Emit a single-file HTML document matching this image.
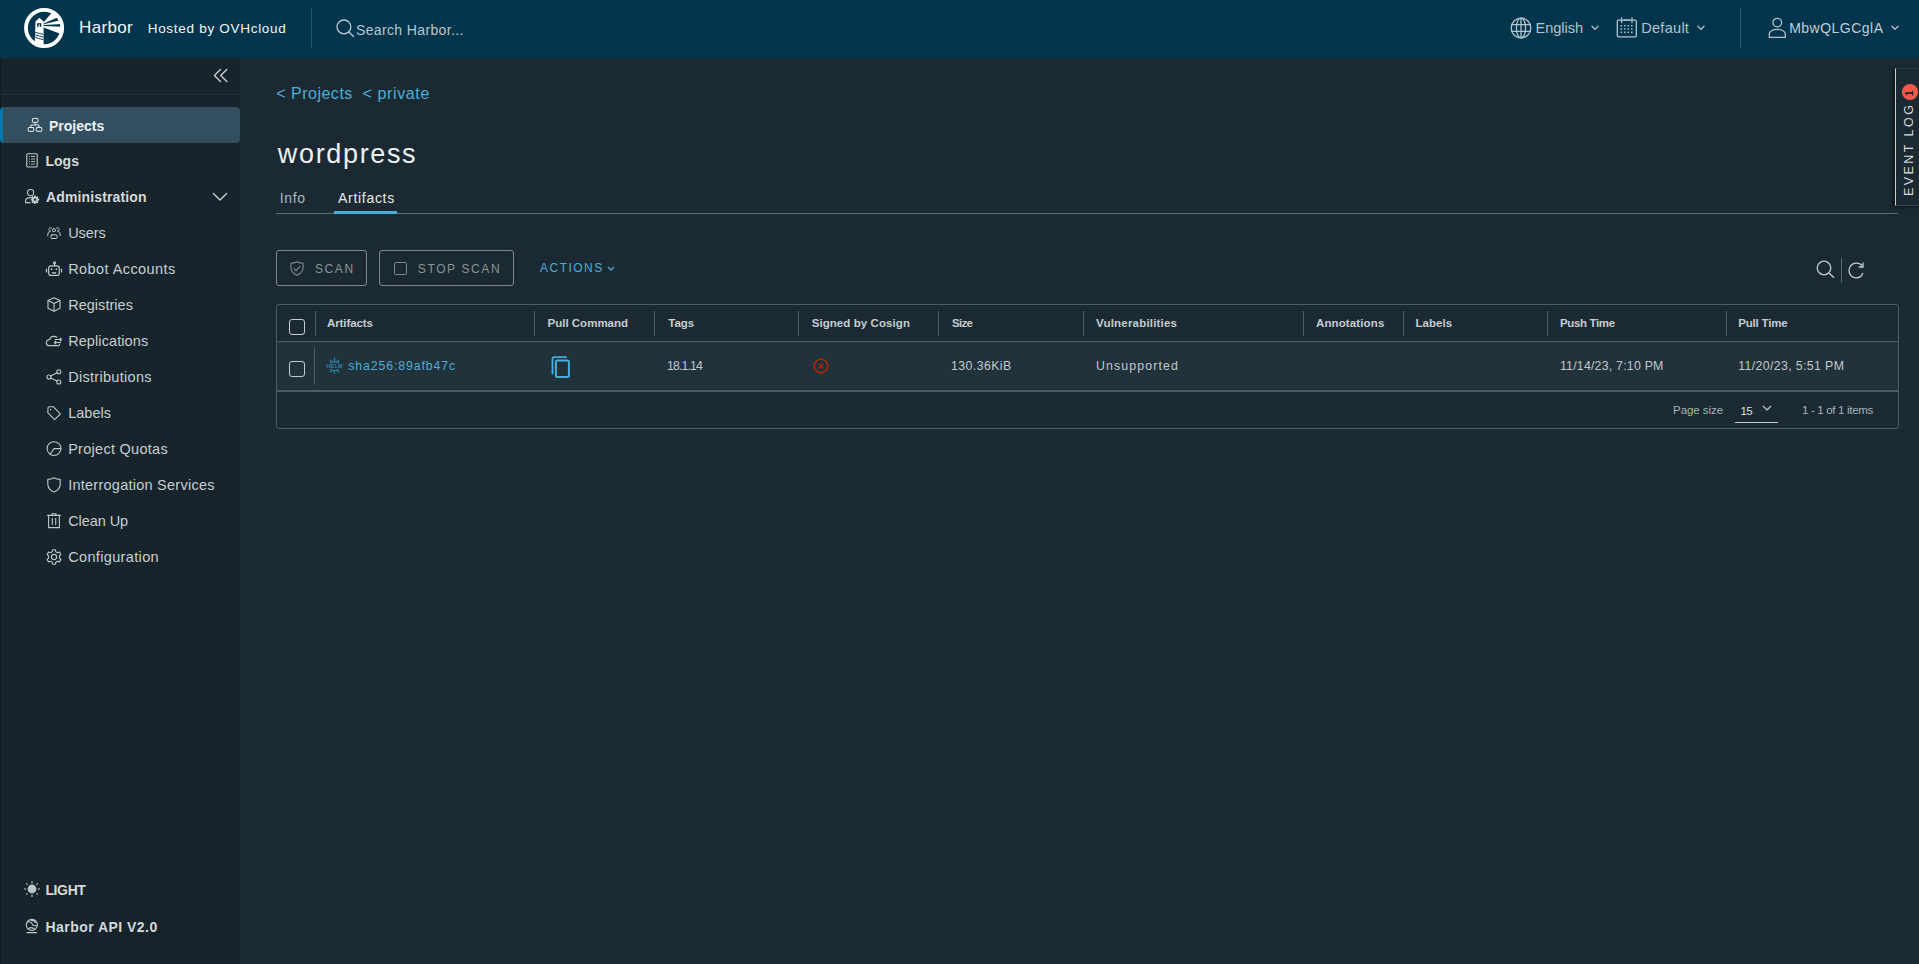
<!DOCTYPE html>
<html><head><meta charset="utf-8">
<style>
*{box-sizing:border-box;margin:0;padding:0}
html,body{width:1919px;height:964px;overflow:hidden;background:#1b2a32;font-family:"Liberation Sans",sans-serif;}
.a{position:absolute;white-space:nowrap;line-height:1}
svg{position:absolute;overflow:visible}
#hdr{position:absolute;left:0;top:0;width:1919px;height:58px;background:#00354d}
#side{position:absolute;left:0;top:58px;width:240px;height:906px;background:#17242b}
.nav{color:#c8ced1;font-size:14.5px}
.navb{color:#d3d9dc;font-size:14px;font-weight:bold}
.link{color:#49afd9}
.th{color:#c6ccd0;font-size:11.5px;font-weight:bold}
.td{color:#c3c9cd;font-size:12.3px}
.vs{position:absolute;width:1px;background:#4b5c66}
.ic{fill:none;stroke:#c1c8cc;stroke-width:1.3;stroke-linecap:round;stroke-linejoin:round}
.hic{fill:none;stroke:#b3c3cb;stroke-width:1.3;stroke-linecap:round;stroke-linejoin:round}
</style></head><body>
<div id="hdr">
  <!-- logo -->
  <svg style="left:20px;top:4px" width="50" height="50" viewBox="0 0 50 50">
    <defs><clipPath id="cc"><circle cx="24.1" cy="24" r="17"/></clipPath></defs>
    <g clip-path="url(#cc)">
      <polygon fill="#fff" points="23.6,18.2 32.5,8 39,11 43,20 41,30 23.6,23.5"/>
      <polygon fill="#00354d" points="23.6,19.4 38,13.2 39,16.5 23.6,20.3"/>
      <polygon fill="#00354d" points="23.6,21.1 42,20 42,22.8 23.6,21.9"/>
      <polygon fill="#fff" points="19.45,13.8 23.6,17.4 23.6,45 14.5,45 15.5,17.4"/>
      <rect x="17.1" y="19.2" width="4.2" height="3.6" fill="#00354d"/>
      <rect x="18.6" y="20.4" width="1.2" height="2.4" fill="#fff"/>
      <path d="M15 28.2 L23.6 30.6 M15 30.8 L23.6 33.2 M15 33.4 L23.6 35.8" stroke="#00354d" stroke-width="0.9"/>
    </g>
    <circle cx="24.1" cy="24" r="18.1" fill="none" stroke="#fff" stroke-width="3.8"/>
  </svg>
  <div class="a" style="left:79.08px;top:18.86px;font-size:17px;color:#f4f6f7;letter-spacing:0.34px">Harbor</div>
  <div class="a" style="left:147.68px;top:22.08px;font-size:13.5px;color:#f4f6f7;letter-spacing:0.71px">Hosted by OVHcloud</div>
  <div style="position:absolute;left:311px;top:8px;width:1px;height:40px;background:#2a5468"></div>
  <svg style="left:336px;top:19px" width="19" height="19" viewBox="0 0 19 19">
    <circle cx="7.9" cy="7.9" r="6.9" fill="none" stroke="#b9c7ce" stroke-width="1.3"/>
    <line x1="12.9" y1="12.9" x2="17.6" y2="17.6" stroke="#b9c7ce" stroke-width="1.4" stroke-linecap="round"/>
  </svg>
  <div class="a" style="left:356.00px;top:22.68px;font-size:14px;color:#b9c7ce;letter-spacing:0.36px">Search Harbor...</div>

  <!-- globe -->
  <svg style="left:1510px;top:17px" width="22" height="22" viewBox="0 0 22 22">
    <g class="hic">
      <circle cx="11" cy="11" r="9.8"/>
      <ellipse cx="11" cy="11" rx="4.6" ry="9.8"/>
      <line x1="11" y1="1.2" x2="11" y2="20.8"/>
      <line x1="1.6" y1="7.6" x2="20.4" y2="7.6"/>
      <line x1="1.6" y1="14.4" x2="20.4" y2="14.4"/>
    </g>
  </svg>
  <div class="a" style="left:1535.60px;top:20.72px;font-size:14.6px;color:#b3c3cb;letter-spacing:-0.07px">English</div>
  <svg style="left:1591px;top:25px" width="8" height="6" viewBox="0 0 8 6"><path class="hic" d="M1 1.2 L4 4.4 L7 1.2"/></svg>
  <!-- calendar -->
  <svg style="left:1616px;top:17px" width="22" height="21" viewBox="0 0 22 21">
    <g class="hic">
      <rect x="1.3" y="3.2" width="19" height="16.6" rx="1"/>
      <line x1="5.6" y1="1" x2="5.6" y2="5.5"/>
      <line x1="16" y1="1" x2="16" y2="5.5"/>
      <line x1="8" y1="3.2" x2="13.6" y2="3.2"/>
    </g>
    <g fill="#b3c3cb">
      <rect x="4.5" y="8" width="1.6" height="1.4"/><rect x="8" y="8" width="1.6" height="1.4"/><rect x="11.5" y="8" width="1.6" height="1.4"/><rect x="15" y="8" width="1.6" height="1.4"/>
      <rect x="4.5" y="11.3" width="1.6" height="1.4"/><rect x="8" y="11.3" width="1.6" height="1.4"/><rect x="11.5" y="11.3" width="1.6" height="1.4"/><rect x="15" y="11.3" width="1.6" height="1.4"/>
      <rect x="4.5" y="14.6" width="1.6" height="1.4"/><rect x="8" y="14.6" width="1.6" height="1.4"/><rect x="11.5" y="14.6" width="1.6" height="1.4"/><rect x="15" y="14.6" width="1.6" height="1.4"/>
    </g>
  </svg>
  <div class="a" style="left:1641.20px;top:20.72px;font-size:14.6px;color:#b3c3cb;letter-spacing:0.25px">Default</div>
  <svg style="left:1697px;top:25px" width="8" height="6" viewBox="0 0 8 6"><path class="hic" d="M1 1.2 L4 4.4 L7 1.2"/></svg>
  <div style="position:absolute;left:1740px;top:8px;width:1px;height:40px;background:#2a5468"></div>
  <!-- user -->
  <svg style="left:1767px;top:17px" width="21" height="22" viewBox="0 0 21 22">
    <g class="hic">
      <circle cx="10.3" cy="5.6" r="4.3"/>
      <path d="M2.3 20.4 L18.3 20.4 L18.3 16.8 C18.3 14.5 15 12.4 10.3 12.4 C5.6 12.4 2.3 14.5 2.3 16.8 Z"/>
    </g>
  </svg>
  <div class="a" style="left:1789.20px;top:20.96px;font-size:14px;color:#c1ced4;letter-spacing:0.48px">MbwQLGCglA</div>
  <svg style="left:1891px;top:25px" width="8" height="6" viewBox="0 0 8 6"><path class="hic" d="M1 1.2 L4 4.4 L7 1.2"/></svg>
</div>

<div id="side">
  <div style="position:absolute;left:0;top:0;width:1px;height:906px;background:#121b20"></div>
  <svg style="left:213px;top:10px" width="16" height="16" viewBox="0 0 16 16">
    <path class="ic" d="M7.5 1.4 L1.4 7.5 L7.5 13.6 M13.8 1.4 L7.7 7.5 L13.8 13.6" style="stroke:#c8cdd0;stroke-width:1.4"/>
  </svg>
  <div style="position:absolute;left:0;top:36px;width:240px;height:1px;background:#232f36"></div>
  <div style="position:absolute;left:0;top:49px;width:240px;height:36px;background:#324e5f;border-radius:4px 4px 4px 4px;border-left:3px solid #0079ad"></div>
  <!-- projects icon -->
  <svg style="left:27px;top:59px" width="16" height="16" viewBox="0 0 16 16">
    <g fill="none" stroke="#e3e8eb" stroke-width="1">
      <rect x="5.4" y="1.4" width="5.6" height="4" rx="0.5"/>
      <rect x="1.2" y="10.5" width="5.5" height="3.9" rx="0.5"/>
      <rect x="9.3" y="10.5" width="5.5" height="3.9" rx="0.5"/>
      <path d="M8.2 5.4 V8 M3.9 10.5 V8 H12 V10.5"/>
    </g>
  </svg>
  <div class="a navb" style="left:48.92px;top:60.80px;color:#eef1f3;letter-spacing:0.02px">Projects</div>
  <!-- logs icon -->
  <svg style="left:26px;top:95px" width="12" height="15" viewBox="0 0 12 15">
    <rect class="ic" style="stroke-width:1.1" x="0.8" y="0.8" width="10.4" height="13.2" rx="1"/>
    <g fill="#aeb6bb"><rect x="3" y="3" width="1" height="1"/><rect x="5" y="3" width="4" height="1"/><rect x="3" y="5.5" width="1" height="1"/><rect x="5" y="5.5" width="4" height="1"/><rect x="3" y="8" width="1" height="1"/><rect x="5" y="8" width="4" height="1"/><rect x="3" y="10.5" width="1" height="1"/><rect x="5" y="10.5" width="4" height="1"/></g>
  </svg>
  <div class="a navb" style="left:45.44px;top:95.52px;letter-spacing:0.02px">Logs</div>
  <!-- admin icon -->
  <svg style="left:24px;top:130px" width="17" height="17" viewBox="0 0 17 17">
    <g fill="none" stroke="#c1c8cc" stroke-width="1.1">
      <circle cx="6.6" cy="4.6" r="3.1"/>
      <path d="M6.4 14.6 H1.6 V12.8 C1.6 10.9 3.8 9.6 6.6 9.6 C7.3 9.6 7.9 9.7 8.4 9.8"/>
    </g>
    <g fill="#c1c8cc">
      <circle cx="11" cy="11.7" r="3.1"/>
      <rect x="10.1" y="7.4" width="1.8" height="8.6" rx="0.3" transform="rotate(0 11 11.7)"/><rect x="10.1" y="7.4" width="1.8" height="8.6" rx="0.3" transform="rotate(45 11 11.7)"/><rect x="10.1" y="7.4" width="1.8" height="8.6" rx="0.3" transform="rotate(90 11 11.7)"/><rect x="10.1" y="7.4" width="1.8" height="8.6" rx="0.3" transform="rotate(135 11 11.7)"/>
    </g>
    <circle cx="11" cy="11.7" r="1.1" fill="#17242b"/>
  </svg>
  <div class="a navb" style="left:46.00px;top:132.32px;letter-spacing:0.13px">Administration</div>
  <svg style="left:212px;top:134px" width="16" height="10" viewBox="0 0 16 10">
    <path class="ic" d="M1.4 1.6 L8 8 L14.6 1.6" style="stroke:#c8cdd0;stroke-width:1.4"/>
  </svg>

  <!-- users icon -->
  <svg style="left:46px;top:168px" width="16" height="14" viewBox="0 0 16 14">
    <g fill="none" stroke="#c1c8cc" stroke-width="1" stroke-linecap="round">
      <circle cx="8" cy="4.2" r="1.6"/>
      <rect x="4.9" y="8.8" width="6.2" height="3.7" rx="1"/>
      <path d="M5.7 2.1 A1.7 1.7 0 1 0 4.6 5.1 L2.3 6.4 L1.7 9.6 M10.3 2.1 A1.7 1.7 0 1 1 11.4 5.1 L13.7 6.4 L14.3 9.6"/>
    </g>
  </svg>
  <div class="a nav" style="left:68.16px;top:167.60px;letter-spacing:-0.08px">Users</div>
  <!-- robot -->
  <svg style="left:45px;top:203px" width="18" height="16" viewBox="0 0 18 16">
    <g fill="none" stroke="#c1c8cc" stroke-width="1.2" stroke-linecap="round">
      <rect x="3.7" y="4.8" width="10.6" height="9.6" rx="2.2"/>
      <path d="M9.5 2.8 V4.8"/><circle cx="9.5" cy="1.8" r="1"/>
      <path d="M1.5 8 V11 M16.5 8 V11"/>
    </g>
    <g fill="#c1c8cc"><circle cx="6.6" cy="8.2" r="0.85"/><circle cx="11.4" cy="8.2" r="0.85"/><rect x="6.9" y="11.2" width="4.3" height="1.3"/></g>
  </svg>
  <div class="a nav" style="left:68.16px;top:203.60px;letter-spacing:0.43px">Robot Accounts</div>
  <!-- registries cube -->
  <svg style="left:47px;top:239px" width="14" height="15" viewBox="0 0 14 15">
    <g class="ic" style="stroke-width:1.1">
      <path d="M7 0.8 L13 3.6 V11.2 L7 14.2 L1 11.2 V3.6 Z"/>
      <path d="M1 3.6 L7 6.6 L13 3.6 M7 6.6 V14.2"/>
    </g>
  </svg>
  <div class="a nav" style="left:68.16px;top:239.60px;letter-spacing:0.03px">Registries</div>
  <!-- replications cloud -->
  <svg style="left:45px;top:276px" width="18" height="14" viewBox="0 0 18 14">
    <g fill="none" stroke="#c1c8cc" stroke-width="1.1" stroke-linecap="round" stroke-linejoin="round">
      <path d="M11.9 3.4 C11 2.4 9.6 2.2 7.6 2.4 C5.8 2.8 4.9 4.2 4.6 5.6 C3 5.7 1.3 6.8 1.3 9.2 C1.5 10.6 2.3 11.6 3.4 11.6 H13.8 C14.4 11.4 14.7 10.8 14.7 10.1"/>
      <path d="M10.2 5.5 H16.5 M15.2 4.2 L16.5 5.5 L15.2 6.8 M15.4 8.5 H9.5 M10.8 7.2 L9.5 8.5 L10.8 9.8"/>
    </g>
  </svg>
  <div class="a nav" style="left:68.16px;top:275.60px;letter-spacing:0.09px">Replications</div>
  <!-- distributions share -->
  <svg style="left:46px;top:311px" width="16" height="16" viewBox="0 0 16 16">
    <g class="ic" style="stroke-width:1.1">
      <circle cx="3" cy="8" r="2"/><circle cx="12.8" cy="2.8" r="2"/><circle cx="12.8" cy="13" r="2"/>
      <path d="M4.8 7 L11 3.8 M4.8 9 L11 12"/>
    </g>
  </svg>
  <div class="a nav" style="left:68.16px;top:311.60px;letter-spacing:0.30px">Distributions</div>
  <!-- labels tag -->
    <svg style="left:47px;top:348px" width="15" height="15" viewBox="0 0 15 15">
    <g class="ic" style="stroke-width:1.1">
      <path d="M1 2 C1 1.4 1.4 0.8 2 0.8 H6.4 L13.4 7.8 L7.6 13.6 L0.8 6.6 Z"/>
    </g>
    <circle cx="3.6" cy="3.6" r="0.8" fill="#c1c8cc"/>
  </svg>
  <div class="a nav" style="left:68.16px;top:347.60px;letter-spacing:0.02px">Labels</div>
  <!-- quotas pie -->
  <svg style="left:46px;top:383px" width="16" height="16" viewBox="0 0 16 16">
    <g class="ic" style="stroke-width:1.1">
      <circle cx="8" cy="7.6" r="6.9"/>
      <path d="M14.9 7.6 H8 L4.2 13.2"/>
    </g>
  </svg>
  <div class="a nav" style="left:68.16px;top:383.60px;letter-spacing:0.28px">Project Quotas</div>
  <!-- shield -->
  <svg style="left:47px;top:419px" width="14" height="16" viewBox="0 0 14 16">
    <path class="ic" style="stroke-width:1.1" d="M7 0.8 C5 2 3 2.4 0.8 2.4 V7 C0.8 10.6 3.4 13.6 7 15 C10.6 13.6 13.2 10.6 13.2 7 V2.4 C11 2.4 9 2 7 0.8 Z"/>
  </svg>
  <div class="a nav" style="left:68.16px;top:419.60px;letter-spacing:0.25px">Interrogation Services</div>
  <!-- trash -->
  <svg style="left:47px;top:455px" width="14" height="16" viewBox="0 0 14 16">
    <g class="ic" style="stroke-width:1.1">
      <path d="M0.6 2.4 H13.4 M5 2.4 V0.8 H9 V2.4 M1.6 2.4 V14.6 H12.4 V2.4 M5.3 5.2 V11.6 M8.7 5.2 V11.6"/>
    </g>
  </svg>
  <div class="a nav" style="left:68.16px;top:455.60px;letter-spacing:-0.07px">Clean Up</div>
  <!-- gear -->
  <svg style="left:46px;top:491px" width="16" height="16" viewBox="0 0 16 16">
    <g class="ic" style="stroke-width:1.1">
      <path d="M6.6 0.8 H9.4 L9.8 2.8 L11.6 3.8 L13.5 3.1 L14.9 5.5 L13.4 6.9 V9.1 L14.9 10.5 L13.5 12.9 L11.6 12.2 L9.8 13.2 L9.4 15.2 H6.6 L6.2 13.2 L4.4 12.2 L2.5 12.9 L1.1 10.5 L2.6 9.1 V6.9 L1.1 5.5 L2.5 3.1 L4.4 3.8 L6.2 2.8 Z"/>
      <circle cx="8" cy="8" r="2.6"/>
    </g>
  </svg>
  <div class="a nav" style="left:68.16px;top:491.60px;letter-spacing:0.35px">Configuration</div>

  <!-- sun -->
  <svg style="left:24px;top:823px" width="16" height="16" viewBox="0 0 16 16">
    <circle cx="8" cy="8" r="4.4" fill="#c1c8cc"/>
    <g stroke="#c1c8cc" stroke-width="1.2">
      <path d="M8 0 V2.2 M8 13.8 V16 M0 8 H2.2 M13.8 8 H16 M2.3 2.3 L3.6 3.6 M12.4 12.4 L13.7 13.7 M2.3 13.7 L3.6 12.4 M12.4 3.6 L13.7 2.3"/>
    </g>
  </svg>
  <div class="a navb" style="left:45.44px;top:824.52px;letter-spacing:-0.38px">LIGHT</div>
  <!-- api icon -->
  <svg style="left:25px;top:860px" width="14" height="16" viewBox="0 0 14 16">
    <g fill="none" stroke="#c1c8cc" stroke-width="1.1" stroke-linecap="round">
      <circle cx="6.85" cy="6.9" r="5.5"/>
      <path d="M2.6 4 C4.5 3.4 6.6 4.4 7.4 6.2 C8 7.6 9.4 8 11.6 7.6 M3.6 10.6 C5.2 9.4 7.8 9.6 9.8 11.4 M6 2.4 C7.6 2.2 9.6 3 10.4 4.4"/>
      <path d="M2 14.6 H11.6"/>
    </g>
  </svg>
  <div class="a navb" style="left:45.44px;top:861.80px;letter-spacing:0.46px">Harbor API V2.0</div>
</div>

<!-- content -->
<div class="a link" style="left:276.16px;top:86.28px;font-size:16px;letter-spacing:0.51px">&lt; Projects</div>
<div class="a link" style="left:362.52px;top:86.28px;font-size:16px;letter-spacing:0.62px">&lt; private</div>
<div class="a" style="left:277.80px;top:140.60px;font-size:27px;color:#eef0f1;letter-spacing:1.66px">wordpress</div>
<div class="a" style="left:279.68px;top:191.00px;font-size:14px;color:#adb8be;letter-spacing:0.65px">Info</div>
<div class="a" style="left:338.08px;top:191.00px;font-size:14px;color:#e6e9eb;letter-spacing:0.69px">Artifacts</div>
<div style="position:absolute;left:276px;top:213px;width:1622px;height:1px;background:#5d6e78"></div>
<div style="position:absolute;left:334px;top:211px;width:63px;height:3px;background:#49afd9"></div>

<!-- event log -->
<div style="position:absolute;left:1895px;top:68px;width:30px;height:138px;border-left:1.5px solid #cfd2d4;border-top:1px solid #2b3b43;border-bottom:1px solid #3a4950;box-shadow:-2px 1px 3px rgba(0,0,0,.55);background:#1b2a32"></div>
<div class="a" style="left:1903px;top:196px;font-size:12.5px;color:#d8dcde;letter-spacing:2.45px;transform:rotate(-90deg);transform-origin:0 0">EVENT LOG</div>
<div style="position:absolute;left:1902px;top:84px;width:15.5px;height:15.5px;border-radius:50%;background:#ee5a4a"></div>
<div class="a" style="left:1905px;top:96px;font-size:10px;font-weight:bold;color:#1a1a1a;transform:rotate(-90deg);transform-origin:0 0">1</div>

<!-- toolbar -->
<div style="position:absolute;left:276px;top:250px;width:91px;height:36px;border:1px solid #7f888d;border-radius:3px"></div>
<svg style="left:290px;top:261px" width="14" height="15" viewBox="0 0 14 15">
  <path fill="none" stroke="#7f888d" stroke-width="1.1" d="M7 0.7 C5 1.8 3 2.2 0.9 2.2 V6.6 C0.9 10 3.4 12.8 7 14.2 C10.6 12.8 13.1 10 13.1 6.6 V2.2 C11 2.2 9 1.8 7 0.7 Z M3.8 7.4 L6 9.6 L10.2 5.2"/>
</svg>
<div class="a" style="left:315.00px;top:263.16px;font-size:12px;letter-spacing:1.60px;color:#8c9499">SCAN</div>
<div style="position:absolute;left:379px;top:250px;width:135px;height:36px;border:1px solid #7f888d;border-radius:3px"></div>
<div style="position:absolute;left:394px;top:262px;width:13px;height:13px;border:1.2px solid #7f888d;border-radius:1.5px"></div>
<div class="a" style="left:417.84px;top:263.16px;font-size:12px;letter-spacing:1.61px;color:#8c9499">STOP SCAN</div>
<div class="a link" style="left:540.00px;top:262.00px;font-size:12px;letter-spacing:1.49px">ACTIONS</div>
<svg style="left:607px;top:266px" width="8" height="5" viewBox="0 0 8 5"><path d="M1 1 L4 4 L7 1" fill="none" stroke="#49afd9" stroke-width="1.3"/></svg>

<svg style="left:1816px;top:260px" width="20" height="20" viewBox="0 0 20 20">
  <circle cx="8" cy="8" r="6.8" fill="none" stroke="#c4cbcf" stroke-width="1.3"/>
  <line x1="13" y1="13" x2="18" y2="17.8" stroke="#c4cbcf" stroke-width="1.3"/>
</svg>
<div style="position:absolute;left:1841px;top:258px;width:1px;height:24px;background:#5a6b75"></div>
<svg style="left:1848px;top:262px" width="17" height="17" viewBox="0 0 17 17">
  <path d="M14.4 3.8 C13.1 2.2 11.1 1.2 8.2 1.2 C4.3 1.2 1 4.3 1 8.6 C1 12.8 4.3 15.8 8.2 15.8 C11.4 15.8 14 13.8 14.8 11" fill="none" stroke="#c4cbcf" stroke-width="1.3"/>
  <path d="M15 0.6 V5 H10.6" fill="none" stroke="#c4cbcf" stroke-width="1.3"/>
</svg>

<!-- table -->
<div style="position:absolute;left:276px;top:304px;width:1623px;height:125px;border:1px solid #4b5c66;border-radius:3px"></div>
<div style="position:absolute;left:277px;top:342px;width:1621px;height:48px;background:#22323b"></div>
<div style="position:absolute;left:277px;top:341px;width:1621px;height:1px;background:#4b5c66"></div>
<div style="position:absolute;left:277px;top:390px;width:1621px;height:2px;background:#4b5c66"></div>

<!-- header -->
<div style="position:absolute;left:289px;top:319px;width:16px;height:16px;border:1.5px solid #c6cbce;border-radius:3px"></div>
<div class="vs" style="left:315px;top:311px;height:25px"></div>
<div class="a th" style="left:327.00px;top:317.52px;letter-spacing:-0.10px">Artifacts</div>
<div class="vs" style="left:534px;top:311px;height:25px"></div>
<div class="a th" style="left:547.48px;top:318.00px;letter-spacing:0.01px">Pull Command</div>
<div class="vs" style="left:654px;top:311px;height:25px"></div>
<div class="a th" style="left:668.28px;top:318.00px;letter-spacing:-0.06px">Tags</div>
<div class="vs" style="left:798px;top:311px;height:25px"></div>
<div class="a th" style="left:811.64px;top:318.00px;letter-spacing:0.08px">Signed by Cosign</div>
<div class="vs" style="left:938px;top:311px;height:25px"></div>
<div class="a th" style="left:951.88px;top:318.24px;letter-spacing:-0.67px">Size</div>
<div class="vs" style="left:1083px;top:311px;height:25px"></div>
<div class="a th" style="left:1096.00px;top:317.76px;letter-spacing:0.20px">Vulnerabilities</div>
<div class="vs" style="left:1303px;top:311px;height:25px"></div>
<div class="a th" style="left:1316.00px;top:318.00px;letter-spacing:0.12px">Annotations</div>
<div class="vs" style="left:1403px;top:311px;height:25px"></div>
<div class="a th" style="left:1415.40px;top:318.00px;letter-spacing:0.07px">Labels</div>
<div class="vs" style="left:1547px;top:311px;height:25px"></div>
<div class="a th" style="left:1559.92px;top:318.00px;letter-spacing:-0.34px">Push Time</div>
<div class="vs" style="left:1726px;top:311px;height:25px"></div>
<div class="a th" style="left:1738.28px;top:318.00px;letter-spacing:-0.20px">Pull Time</div>

<!-- row -->
<div style="position:absolute;left:289px;top:361px;width:16px;height:16px;border:1.5px solid #c6cbce;border-radius:3px"></div>
<div class="vs" style="left:314px;top:347px;height:38px"></div>
<svg style="left:326px;top:357px" width="18" height="17" viewBox="0 0 18 17">
  <g fill="none" stroke="#2a86ad" stroke-width="1.1" stroke-linecap="round">
    <path d="M4.5 5.8 Q8.5 3.6 12.5 5.8 M4.5 12.6 Q8.5 14.8 12.5 12.6"/>
    <path d="M8.5 4.5 V1.2 M6.2 4.8 L4.1 3.2 M10.8 4.8 L12.9 3.2 M8.5 13.9 V16.2 M6.2 13.6 L4.1 15 M10.8 13.6 L12.9 15"/>
  </g>
  <text x="8.6" y="11.1" font-size="5.4" font-weight="bold" text-anchor="middle" fill="#2a86ad" font-family="Liberation Sans" letter-spacing="0.2">HELM</text>
</svg>
<div class="a td" style="color:#49afd9;left:348.16px;top:360.04px;letter-spacing:0.90px">sha256:89afb47c</div>
<svg style="left:550px;top:355px" width="22" height="24" viewBox="0 0 22 24">
  <path d="M2.5 18.6 V3.8 C2.5 2.8 3.1 2.1 4.1 2.1 H16.1" fill="none" stroke="#49afd9" stroke-width="1.8" stroke-linecap="round"/>
  <rect x="5.9" y="5.5" width="13" height="16.5" rx="1.5" fill="none" stroke="#49afd9" stroke-width="2"/>
</svg>
<div class="a td" style="left:667.00px;top:360.04px;letter-spacing:-0.88px">18.1.14</div>
<svg style="left:813px;top:358px" width="16" height="16" viewBox="0 0 16 16">
  <circle cx="8" cy="8" r="6.8" fill="none" stroke="#c92100" stroke-width="1.3"/>
  <path d="M5.6 5.6 L10.4 10.4 M10.4 5.6 L5.6 10.4" stroke="#c92100" stroke-width="1.2"/>
</svg>
<div class="a td" style="left:951.08px;top:360.04px;letter-spacing:0.41px">130.36KiB</div>
<div class="a td" style="left:1096.00px;top:360.04px;letter-spacing:1.14px">Unsupported</div>
<div class="a td" style="left:1559.92px;top:360.04px;letter-spacing:0.24px">11/14/23, 7:10 PM</div>
<div class="a td" style="left:1738.28px;top:360.04px;letter-spacing:0.38px">11/20/23, 5:51 PM</div>

<!-- footer -->
<div class="a" style="left:1673.00px;top:405.12px;font-size:11.5px;color:#a9b3b8;letter-spacing:-0.04px">Page size</div>
<div class="a" style="left:1740.52px;top:406.00px;font-size:11.5px;color:#dde1e3;letter-spacing:-0.6px">15</div>
<svg style="left:1762px;top:405px" width="10" height="7" viewBox="0 0 10 7"><path d="M1 1 L5 5 L9 1" fill="none" stroke="#c8cdd0" stroke-width="1.2"/></svg>
<div style="position:absolute;left:1735px;top:422px;width:43px;height:1px;background:#c3c9cc"></div>
<div class="a" style="left:1802.00px;top:405.12px;font-size:11.5px;color:#a9b3b8;letter-spacing:-0.32px">1 - 1 of 1 items</div>
</body></html>
